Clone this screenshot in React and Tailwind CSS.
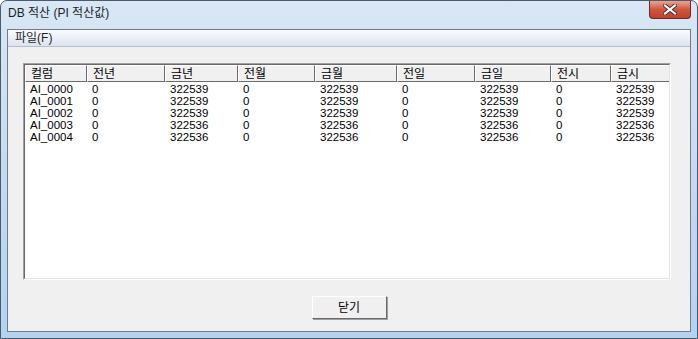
import React from "react";

const cols = [
  { name: "컬럼", w: "w-[62px]" },
  { name: "전년", w: "w-[78px]" },
  { name: "금년", w: "w-[73px]" },
  { name: "전월", w: "w-[77px]" },
  { name: "금월", w: "w-[82px]" },
  { name: "전일", w: "w-[78px]" },
  { name: "금일", w: "w-[76px]" },
  { name: "전시", w: "w-[60px]" },
  { name: "금시", w: "w-[59px]" },
];

const rows = [
  ["AI_0000", "0", "322539", "0", "322539", "0", "322539", "0", "322539"],
  ["AI_0001", "0", "322539", "0", "322539", "0", "322539", "0", "322539"],
  ["AI_0002", "0", "322539", "0", "322539", "0", "322539", "0", "322539"],
  ["AI_0003", "0", "322536", "0", "322536", "0", "322536", "0", "322536"],
  ["AI_0004", "0", "322536", "0", "322536", "0", "322536", "0", "322536"],
];

const font = { fontFamily: '"Liberation Sans", "Noto Sans CJK KR", sans-serif' };

export default function App() {
  return (
    <div
      className="w-[698px] h-[339px] flex flex-col rounded-t-[7px] border border-[#4b5b6e] bg-gradient-to-b from-[#d9e7f5] via-[#c6daef] to-[#b3d3f0] text-black"
      style={font}
    >
      {/* title bar */}
      <div className="h-[28px] flex items-start">
        <div className="pl-[7px] pt-[5px] text-[12px] leading-[14px] text-[#1e1e1e]">DB 적산 (PI 적산값)</div>
        <div className="ml-auto mr-[6px] w-[42px] h-[18px] rounded-b-[4px] border border-t-0 border-[#6b2a22] bg-gradient-to-b from-[#e8a493] via-[#d0553d] to-[#c0412c] flex items-center justify-center">
          <svg width="14" height="11" viewBox="0 0 14 11">
            <path d="M2 1.5 L12 9.5 M12 1.5 L2 9.5" stroke="#4a2a28" strokeWidth="4" strokeLinecap="square" />
            <path d="M2 1.5 L12 9.5 M12 1.5 L2 9.5" stroke="#ffffff" strokeWidth="2.2" strokeLinecap="square" />
          </svg>
        </div>
      </div>

      {/* client area */}
      <div className="flex-1 mx-[6px] mb-[6px] border border-[#6e7c8c] bg-[#f0f0f0] flex flex-col">
        <div className="h-[17px] border-b border-[#b6bccc] bg-gradient-to-b from-[#fbfcfe] to-[#dce2f1] flex items-center pl-[7px]">
          <span className="text-[12px] leading-[14px] text-[#1e1e1e]">파일(F)</span>
        </div>

        <div className="pt-[16px] pl-[15px]">
          <div className="w-[648px] h-[217px] border-t border-l border-[#a0a0a0] border-r border-b border-r-white border-b-white">
            <div className="w-full h-full border-t border-l border-[#696969] border-r border-b border-r-[#e3e3e3] border-b-[#e3e3e3] bg-white overflow-hidden">
              <div className="flex h-[17px] bg-[#f0f0f0]">
                {cols.map((c) => (
                  <div
                    key={c.name}
                    className={`${c.w} shrink-0 h-full border-t border-l border-white border-r border-b border-r-[#696969] border-b-[#696969] text-[12px] leading-[14px] pl-[5px] pt-[1px]`}
                  >
                    {c.name}
                  </div>
                ))}
              </div>
              <div className="pt-[1px]">
                {rows.map((r) => (
                  <div key={r[0]} className="flex h-[12px]">
                    {r.map((v, i) => (
                      <div key={i} className={`${cols[i].w} shrink-0 text-[11.5px] leading-[12px] pl-[5px]`}>
                        {v}
                      </div>
                    ))}
                  </div>
                ))}
              </div>
            </div>
          </div>
        </div>

        <div className="flex justify-center pt-[16px]">
          <button className="w-[75px] h-[23px] border-t border-l border-white border-r border-b border-r-[#696969] border-b-[#696969] bg-[#f0f0f0] shadow-[1px_1px_0_#a0a0a0] text-[12px] leading-[14px]">
            닫기
          </button>
        </div>
      </div>
    </div>
  );
}
